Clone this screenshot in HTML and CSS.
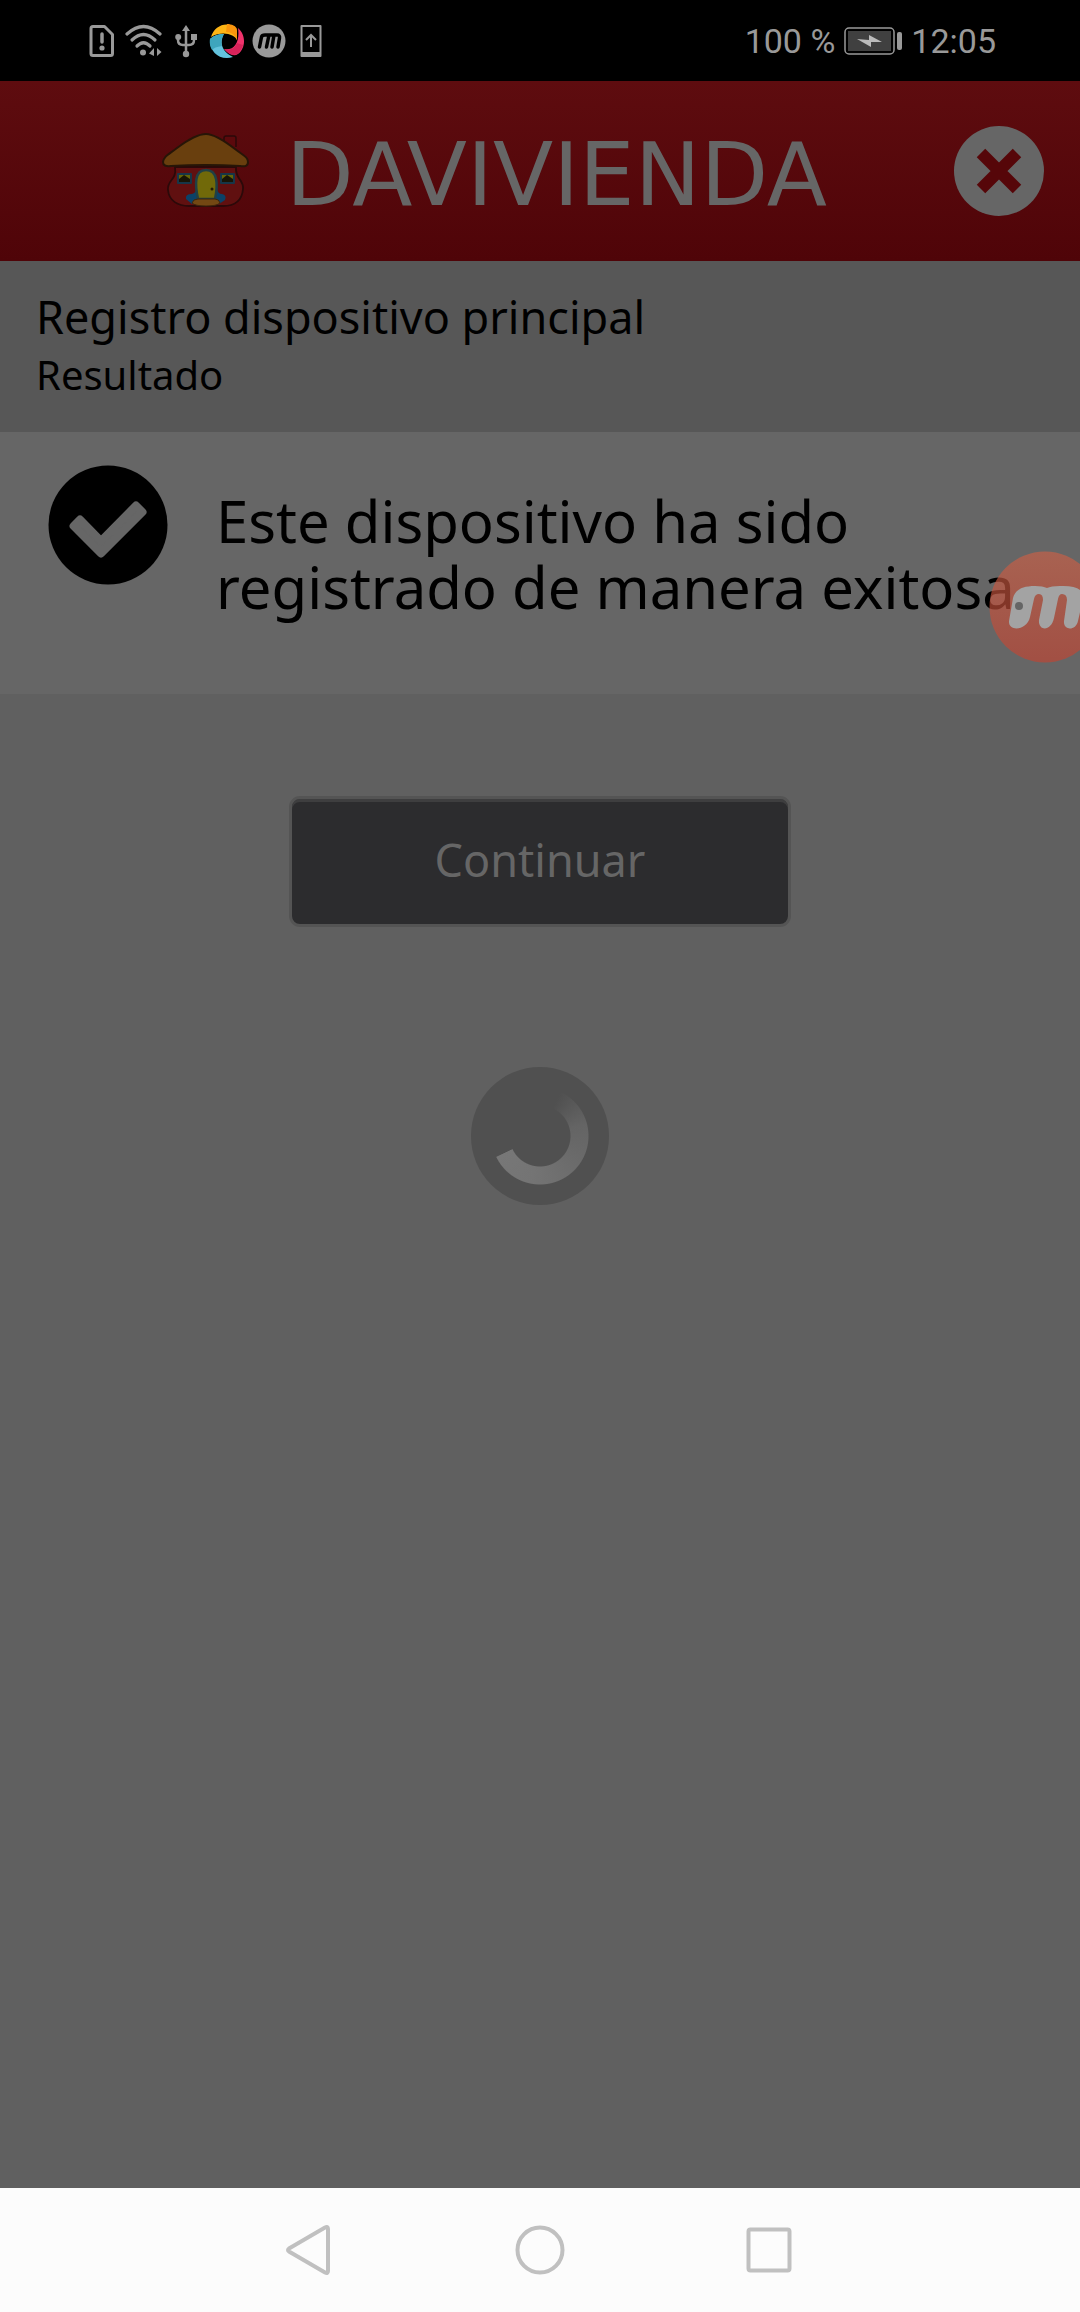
FILE: index.html
```html
<!DOCTYPE html>
<html lang="es">
<head>
<meta charset="utf-8">
<meta name="viewport" content="width=device-width, initial-scale=1">
<title>Registro dispositivo principal</title>
<link rel="stylesheet" href="styles.css">
</head>
<body>
<div class="screen">
  <div class="status">
    <div class="status-icons">
      <svg width="26" height="34" viewBox="0 0 26 34" fill="none" stroke="#999" stroke-width="3"><path d="M4 2.500H15.500L23.500 10.500V29.500Q23.500 31.500 21.500 31.500H4Q2 31.500 2 29.500V4.500Q2 2.500 4 2.500Z" stroke-linejoin="round"/><path d="M13 10V18" stroke-linecap="round" stroke-width="3.500"/><circle cx="13" cy="24" r="2.600" fill="#999" stroke="none"/></svg>
      <svg class="wifi" width="38" height="34" viewBox="0 0 38 34" fill="none" stroke="#999" stroke-width="3.200" stroke-linecap="round"><path d="M2 10Q18.500 -5 35 10"/><path d="M7 16Q18.500 5 30 16"/><path d="M12 22Q18.500 15.500 25 22"/><circle cx="18" cy="28.500" r="3" fill="#999" stroke="none"/><path d="M29 24V32L24 29.500ZM32 24V32L36.500 28Z" fill="#999" stroke="none"/></svg>
      <svg class="usb" width="22" height="34" viewBox="0 0 22 34" fill="none" stroke="#999" stroke-width="2.500"><path d="M11 5V29M3 13V16Q3 21 8 21H14Q19 21 19 16V13"/><path d="M11 1L15 7H7ZM16 10H22V16H16Z" fill="#999" stroke="none"/><circle cx="3.200" cy="13" r="3" fill="#999" stroke="none"/><circle cx="11" cy="30" r="3.200" fill="#999" stroke="none"/></svg>
      <svg class="camera" width="36" height="36" viewBox="0 0 36 36"><path d="M2 14C5 4 15 -1 24 3Q28 5 28 17C26 12 14 7 2 14Z" fill="#fdb515"/><path d="M18 1C22 1 28 3 28 7V17Q25 9 17 9Z" fill="#f9950e"/><path d="M29 5C38 13 36 26 29 31Q23 35 15 26C26 28 31 18 29 5Z" fill="#f0336c"/><path d="M15 26Q24 29 28 20L34 22Q31 32 24 32Q20 31 15 26Z" fill="#d7235a"/><path d="M1 16Q6 11 15 11C10 20 13 29 24 34C10 38 0 28 1 16Z" fill="#63c3dd"/><path d="M1 16Q7 11 15 11Q11 17 13 23Q5 24 3 27Q0 22 1 16Z" fill="#3ea5bd"/></svg>
      <svg class="recorder" width="34" height="34" viewBox="0 0 34 34"><circle cx="17" cy="17" r="16.500" fill="#999"/><path d="M7.500 23L9.500 13Q10 11 13 11H17L14.500 23M17 11H22L20 23M22 11H25Q28 11 27.500 14L26 23" fill="none" stroke="#000" stroke-width="3.500" stroke-linecap="round" stroke-linejoin="round"/></svg>
      <svg class="update" width="22" height="34" viewBox="0 0 22 34" fill="none" stroke="#999" stroke-width="2"><path d="M1.500 2H20.500V32H1.500Z" stroke-linejoin="round"/><path d="M2 30H20" stroke-width="4"/><path d="M11 23V11M6 16L11 11L16 16"/></svg>
    </div>
    <div class="status-info">
      <span>100 %</span>
      <svg width="58" height="28" viewBox="0 0 58 28"><rect x="1" y="1" width="49" height="26" rx="4" fill="none" stroke="#999" stroke-width="1.500"/><rect x="4" y="4" width="43" height="20" fill="#404040"/><path d="M13 12L25 13V8L38 15L27 15V20Z" fill="#bbb"/><rect x="53" y="5" width="5" height="18" rx="2" fill="#999"/></svg>
      <span>12:05</span>
    </div>
  </div>

  <header class="header">
    <a class="brand" href="#">
      <svg width="88" height="76" viewBox="0 0 88 76" stroke-linejoin="round"><path d="M13 34C15 48 5 46 6 57C7 68 16 73 27 73H61C72 73 80 68 81 56C82 46 73 47 74 34Z" fill="#601010" stroke="#2b0909" stroke-width="1.800"/><path d="M62 10V5Q62 3 64 3H72Q74 3 74 5V14" fill="#5b090c" stroke="#2b0909" stroke-width="1.500"/><path d="M1 29C2 23 6 22 15 15C27 6 37 1 44 1C51 1 60 6 73 16C82 23 86 24 86 29C86 33 83 34 78 33Q44 31 9 33Q1 34 1 29Z" fill="#693f0e" stroke="#271507" stroke-width="2"/><path d="M16 41H29V50H16ZM59 41H72V50H59Z" fill="#656508" stroke="#173648" stroke-width="2"/><path d="M17 49V46L22 42L28 46V49ZM60 49V46L65 42L71 46V49Z" fill="#181506"/><path d="M24 66Q23 61 30 61Q34 60 34 56H55Q56 61 60 61Q65 62 63 67L57 71H30Z" fill="#0b4268"/><path d="M36 66C33 52 32 37 44 37C56 37 56 52 53 66Z" fill="#716909" stroke="#214044" stroke-width="2.500"/><circle cx="50" cy="56" r="1.500" fill="#251c05"/><path d="M30 70Q31 66 36 66H53Q57 66 58 70Q55 73 44 73Q33 73 30 70Z" fill="#734813" stroke="#3e250b"/></svg>
      <span class="brand-name">DAVIVIENDA</span>
    </a>
    <button class="close" type="button" aria-label="Cerrar">
      <svg width="90" height="90" viewBox="0 0 90 90"><circle cx="45" cy="45" r="45" fill="#666"/><path d="M27 27L63 63M63 27L27 63" stroke="#560609" stroke-width="12"/></svg>
    </button>
  </header>

  <section class="heading">
    <h1>Registro dispositivo principal</h1>
    <h2>Resultado</h2>
  </section>

  <main class="main">
    <section class="result">
      <svg class="check" width="120" height="120" viewBox="0 0 120 120"><circle cx="60" cy="60" r="59.500"/><path d="M32 54.600L53 76L88 40.600L94.500 47L53 88.500L25.600 61Z" fill="#666" stroke="#666" stroke-width="8" stroke-linejoin="round"/></svg>
      <p>Este dispositivo ha sido registrado de manera exitosa.</p>
    </section>
    <button class="continue" type="button">Continuar</button>
    <div class="spinner" role="status" aria-label="Cargando"></div>
    <svg class="bubble" width="112" height="112" viewBox="0 0 112 112"><defs><linearGradient id="orb" x2="0" y2="1"><stop stop-color="#cc6046"/><stop offset="1" stop-color="#c24331"/></linearGradient></defs><circle cx="56" cy="56" r="55.500" fill="url(#orb)" opacity=".65"/><path d="M20 70L24 47C26 39 33 35 46 35Q54 35 58 37Q62 35 71 35Q96 34 94 48L89 70C87 80 74 80 75 70L78 49Q78 43 73 43Q70 43 69 48L65 67C62 81 49 80 50 69L54 49Q54 43 50 43Q46 43 45 48L41 66C38 80 19 81 20 70Z" fill="#a3a3a3"/><circle cx="30" cy="55" r="4" fill="#656565"/></svg>
  </main>

  <nav class="navbar" aria-label="Sistema">
    <button type="button" aria-label="Atrás"><svg width="50" height="50" viewBox="0 0 50 50"><path d="M4 23.500L40 2.500Q43 1 43 4V46Q43 49 40 47.500L4 26.500Q2 25 4 23.500Z"/></svg></button>
    <button type="button" aria-label="Inicio"><svg width="50" height="50" viewBox="0 0 50 50"><circle cx="25" cy="25" r="22.500"/></svg></button>
    <button type="button" aria-label="Recientes"><svg width="50" height="50" viewBox="0 0 50 50"><rect x="3.500" y="4.500" width="41" height="41" rx="2"/></svg></button>
  </nav>
</div>
</body>
</html>
```

FILE: styles.css
```css
* {
  box-sizing: border-box;
}

body {
  margin: 0;
  background: #606060;
  color: #000;
  font-family: "Noto Sans", "Open Sans", sans-serif;
}

button {
  margin: 0;
  padding: 0;
  border: 0;
  background: none;
  font: inherit;
  cursor: pointer;
}

svg {
  display: block;
}

.screen {
  display: flex;
  flex-direction: column;
  min-height: 100vh;
  overflow: hidden;
}

.status {
  display: flex;
  align-items: center;
  justify-content: space-between;
  height: 81px;
  padding: 0 84px 0 89px;
  background: #000;
  color: #999;
  font: 34px/40px Roboto, sans-serif;
}

.status-icons {
  display: flex;
  align-items: center;
  gap: 10px;
}

.usb {
  margin-left: 2px;
}

.camera {
  margin-left: 2px;
}

.recorder {
  margin-left: -3px;
}

.update {
  margin-left: 4px;
}

.status-info {
  display: flex;
  align-items: center;
  gap: 9px;
}

.header {
  display: flex;
  align-items: center;
  justify-content: space-between;
  height: 180px;
  padding: 0 36px 0 162px;
  background: linear-gradient(#5e0c0f, #4f0408);
}

.brand {
  display: flex;
  align-items: center;
  gap: 36px;
  color: #666;
  text-decoration: none;
}

.brand-name {
  padding-top: 8px;
  font: 88px/96px "DejaVu Sans", sans-serif;
}

.heading {
  padding: 26px 36px 34px;
  background: #575757;
}

.heading h1,
.heading h2 {
  margin: 0;
  font-weight: 400;
}

.heading h1 {
  font-size: 45px;
  line-height: 60px;
}

.heading h2 {
  font-size: 40px;
  line-height: 51px;
  padding-top: 2px;
  margin-bottom: -2px;
}

.main {
  position: relative;
  display: flex;
  flex: 1;
  flex-direction: column;
  align-items: center;
}

.result {
  display: flex;
  align-self: stretch;
  align-items: flex-start;
  gap: 48px;
  padding: 33px 0 74px 48px;
  background: #666;
}

.check {
  flex: none;
}

.result p {
  flex: 1;
  margin: 0;
  padding-top: 23px;
  font-size: 58px;
  line-height: 66px;
}

.continue {
  width: 502px;
  height: 131px;
  margin-top: 102px;
  padding-bottom: 4px;
  border: 3px solid #545454;
  border-radius: 11px;
  background: #2c2c2e;
  box-shadow: inset 0 3px #3e3e3f;
  color: #666;
  font-size: 45px;
  line-height: 60px;
}

.spinner {
  width: 138px;
  height: 138px;
  margin-top: 140px;
  border-radius: 50%;
  background:
    radial-gradient(circle, #505050 30px, transparent 31px 48px, #505050 49px),
    conic-gradient(#505050 25deg, #646464 75deg, #747474 190deg, #777 244deg, #505050 245deg);
}

.bubble {
  position: absolute;
  top: 119px;
  right: -21px;
}

.navbar {
  display: flex;
  align-items: center;
  justify-content: center;
  gap: 180px;
  height: 124px;
  background: #fcfcfc;
}

.navbar svg {
  fill: none;
  stroke: #c0c0c0;
  stroke-width: 4;
}
```
